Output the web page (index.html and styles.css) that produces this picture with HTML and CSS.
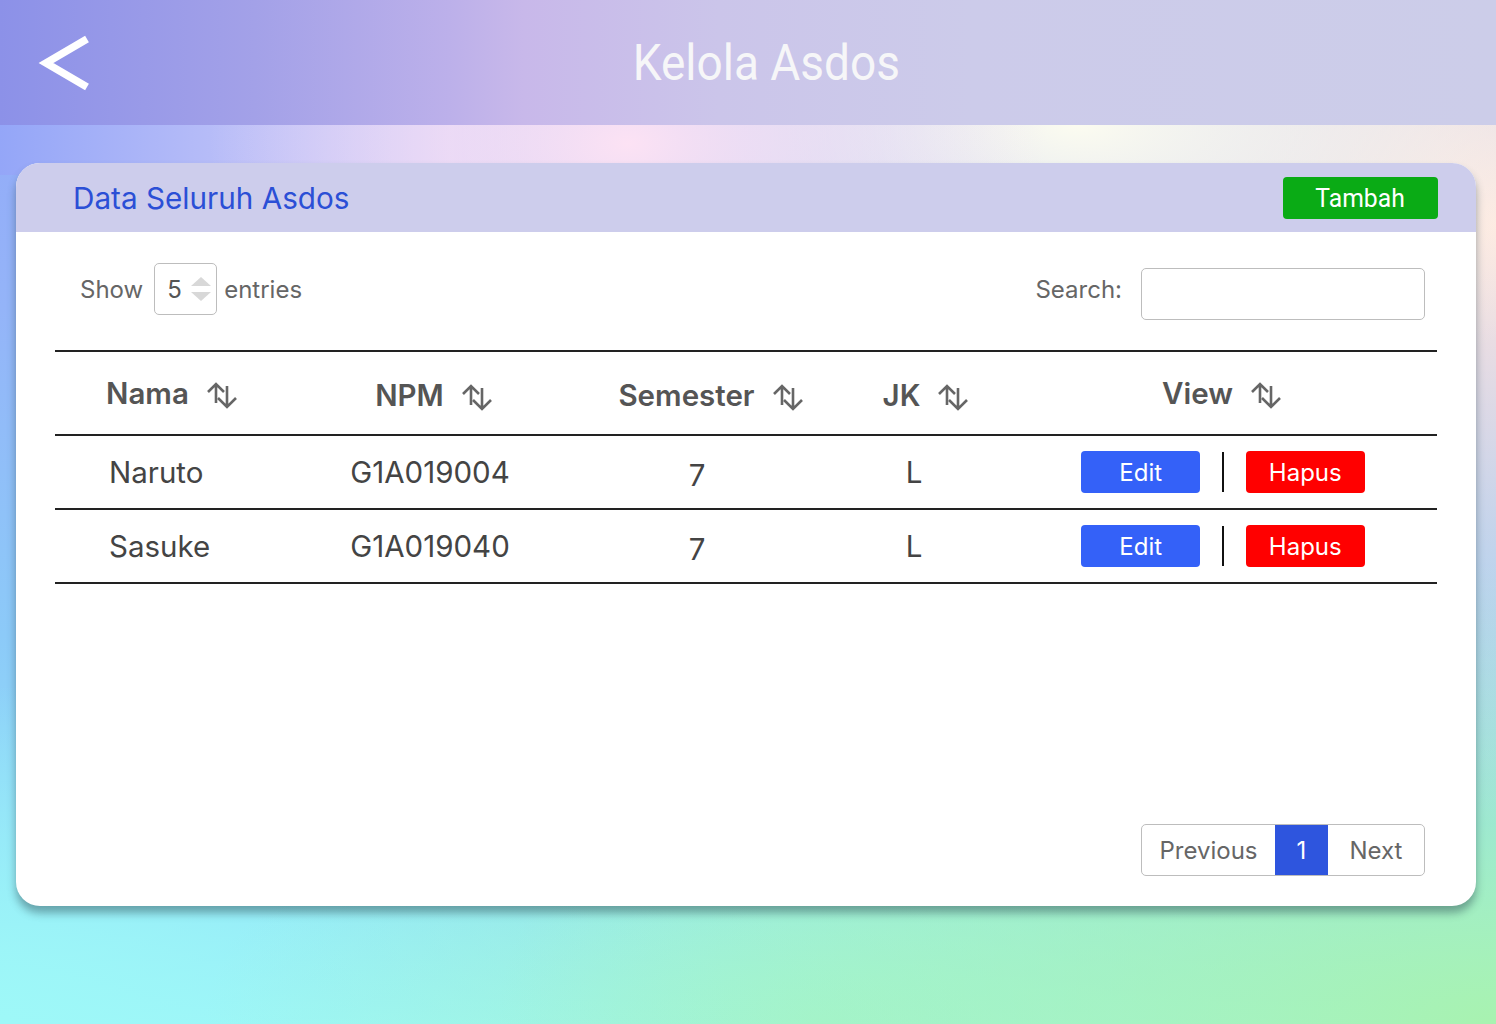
FILE: index.html
```html
<!DOCTYPE html>
<html lang="id">
<head>
<meta charset="utf-8">
<title>Kelola Asdos</title>
<link rel="stylesheet" href="styles.css">
</head>
<body>
<header class="topbar">
  <a class="back" href="#" aria-label="Kembali">
    <svg width="54" height="56" viewBox="0 0 54 56"><polyline points="49,4 8,28 49,52" fill="none" stroke="#fff" stroke-width="7.5" stroke-linejoin="miter" stroke-miterlimit="10"/></svg>
  </a>
  <h1 class="title"><span>Kelola Asdos</span></h1>
</header>

<main class="card">
  <div class="card-head">
    <h2 class="card-title">Data Seluruh Asdos</h2>
    <button class="btn-add"><span>Tambah</span></button>
  </div>

  <div class="controls">
    <label class="length">Show
      <span class="select"><span class="val">5</span>
        <span class="spin"><i class="up"></i><i class="down"></i></span>
      </span>
      entries</label>
    <label class="search">Search: <span class="search-box"></span></label>
  </div>

  <table class="grid">
    <colgroup>
      <col class="c1"><col class="c2"><col class="c3"><col class="c4"><col class="c5">
    </colgroup>
    <thead>
      <tr>
        <th class="left"><span class="th">Nama</span></th>
        <th class="h2"><span class="th">NPM</span></th>
        <th class="h3"><span class="th">Semester</span></th>
        <th class="h4"><span class="th">JK</span></th>
        <th class="h5"><span class="th">View</span></th>
      </tr>
    </thead>
    <tbody>
      <tr>
        <td class="left">Naruto</td>
        <td>G1A019004</td>
        <td class="num">7</td>
        <td>L</td>
        <td><div class="acts"><button class="btn edit">Edit</button><span class="sep"></span><button class="btn del">Hapus</button></div></td>
      </tr>
      <tr>
        <td class="left">Sasuke</td>
        <td>G1A019040</td>
        <td class="num">7</td>
        <td>L</td>
        <td><div class="acts"><button class="btn edit">Edit</button><span class="sep"></span><button class="btn del">Hapus</button></div></td>
      </tr>
    </tbody>
  </table>

  <nav class="pager">
    <a class="pg prev">Previous</a>
    <a class="pg cur">1</a>
    <a class="pg next">Next</a>
  </nav>
</main>
</body>
</html>
```
FILE: styles.css
```css
* { box-sizing: border-box; }
html, body { margin: 0; padding: 0; }
body {
  width: 1496px;
  height: 1024px;
  overflow: hidden;
  font-family: Inter, "Noto Sans", sans-serif;
  background-color: #93b0f8;
  background-image:
    radial-gradient(ellipse 420px 260px at 42% 14%, #fce2f4 0%, rgba(252,226,244,0) 100%),
    radial-gradient(ellipse 620px 300px at 72% 12%, #fcfcf0 0%, rgba(252,252,240,0) 100%),
    radial-gradient(ellipse 620px 600px at 100% 22%, #fde6de 0%, rgba(253,230,222,0) 100%),
    radial-gradient(ellipse 1000px 460px at 100% 100%, #a8f2b0 0%, rgba(168,242,176,0) 100%),
    radial-gradient(ellipse 620px 280px at 55% 100%, #a2f4d4 0%, rgba(162,244,212,0) 100%),
    radial-gradient(ellipse 560px 340px at 0% 100%, #9ef8f8 0%, rgba(158,248,248,0) 100%),
    linear-gradient(90deg, #94a6f8 0%, #b6bcf8 14%, #d6d0f8 30%, rgba(230,220,248,0) 45%),
    linear-gradient(180deg, #93a6f8 0%, #94b4f8 30%, #8ccaf8 62%, #92e4f8 88%, #9cf4f8 100%);
  background-size: 100% 100%, 100% 100%, 100% 100%, 100% 100%, 100% 100%, 100% 100%, 100% 175px, 100% 100%;
  background-repeat: no-repeat;
}

.topbar {
  height: 125px;
  display: flex;
  align-items: center;
  position: relative;
  background: linear-gradient(90deg, #8c91e8 0%, #a3a1e8 17%, #bcb0ea 30%, #c8b8ea 35%, #cbc5ea 48%, #cccbea 65%, #cccde9 100%);
}
.back {
  display: flex;
  margin-left: 38px;
}
.title {
  position: absolute;
  left: 0; right: 0; top: 0; bottom: 0;
  margin: 0;
  display: flex;
  align-items: center;
  justify-content: center;
  pointer-events: none;
  font-family: Roboto, "Open Sans", sans-serif;
  font-weight: 400;
  font-size: 50px;
  color: #f6f6f8;
  padding-left: 36px;
}
.title span { display: inline-block; transform: scaleX(0.92); }

.card {
  margin: 38px 20px 0 16px;
  height: 743px;
  background: #fff;
  border-radius: 24px;
  overflow: hidden;
  display: flex;
  flex-direction: column;
  box-shadow: 0 7px 8px rgba(40, 70, 80, 0.45);
}
.card-head {
  height: 69px;
  background: #cdcdec;
  display: flex;
  align-items: center;
  justify-content: space-between;
  padding: 0 38px 0 57px;
}
.card-title {
  margin: 0;
  font-weight: 400;
  font-size: 29.7px;
  color: #2b4fd6;
}
.btn-add {
  width: 155px;
  height: 42px;
  border: 0;
  border-radius: 4px;
  background: #0aab15;
  color: #fff;
  font-family: Roboto, sans-serif;
  font-size: 26px;
}
.btn-add span { display: inline-block; transform: scaleX(0.95); }

.controls {
  display: flex;
  justify-content: space-between;
  align-items: flex-start;
  padding: 31px 51px 0 64px;
  height: 118px;
  color: #666;
  font-size: 24px;
}
.length, .search {
  display: flex;
  align-items: center;
}
.select {
  width: 63px;
  height: 52px;
  margin: 0 7px 0 11px;
  border: 1.5px solid #bdbdbd;
  border-radius: 5px;
  display: flex;
  align-items: center;
  justify-content: space-between;
  padding: 0 5px 0 12px;
  color: #555;
}
.spin { display: flex; flex-direction: column; gap: 6px; }
.spin i { width: 0; height: 0; border-left: 10px solid transparent; border-right: 10px solid transparent; }
.spin .up { border-bottom: 9px solid #d8d8d8; }
.spin .down { border-top: 9px solid #d8d8d8; }
.search { gap: 19px; align-items: flex-start; padding-top: 12px; }
.search-box {
  width: 284px;
  height: 52px;
  margin-top: -7px;
  border: 1.5px solid #bdbdbd;
  border-radius: 5px;
  background: #fff;
}

.grid {
  margin: 0 39px;
  width: 1382px;
  table-layout: fixed;
  border-collapse: collapse;
}
.c1 { width: 245px; }
.c2 { width: 260px; }
.c3 { width: 274px; }
.c4 { width: 160px; }
.c5 { width: 443px; }
.grid thead tr { border-top: 2px solid #222; border-bottom: 2px solid #222; height: 84px; }
.grid tbody tr { border-bottom: 2px solid #222; height: 74px; }
.grid th {
  font-weight: 600;
  font-size: 29.5px;
  color: #555;
  text-align: center;
  padding: 0;
}
.grid th.left { text-align: left; padding-left: 51px; }
.grid th.h2 { padding-left: 12px; padding-top: 4px; }
.grid th.h3 { padding-left: 32px; padding-top: 4px; }
.grid th.h4 { padding-left: 28px; padding-top: 4px; }
.grid th.h5 { padding-left: 17px; }
.th {
  display: inline-flex;
  align-items: center;
  gap: 15px;
}
.th::after {
  content: "";
  width: 38px;
  height: 30px;
  margin-top: 3px;
  background: url("data:image/svg+xml,%3Csvg xmlns='http://www.w3.org/2000/svg' viewBox='0 0 38 30'%3E%3Cg fill='none' stroke='%23666' stroke-width='2.6'%3E%3Cpath d='M12 23V4M4 12l8-8 8 8'/%3E%3Cpath d='M23 6v21M14 18l9 9 9-9'/%3E%3C/g%3E%3C/svg%3E") no-repeat center / contain;
}
.grid td {
  font-size: 29.5px;
  color: #444;
  text-align: center;
  padding: 0;
}
.grid td.left { text-align: left; padding-left: 54px; }
.grid td.num { padding-top: 6px; }
.acts {
  display: flex;
  align-items: center;
  justify-content: center;
  gap: 22px;
  padding-left: 15px;
}
.btn {
  width: 119px;
  height: 42px;
  border: 0;
  border-radius: 4px;
  color: #fff;
  font-family: Inter, sans-serif;
  font-size: 24px;
}
.edit { background: #3461f8; }
.del { background: #ff0000; }
.sep { width: 1.5px; height: 40px; background: #111; }

.pager {
  margin-top: auto;
  margin-bottom: 30px;
  align-self: flex-end;
  margin-right: 51px;
  display: flex;
  height: 52px;
  border: 1.5px solid #bdbdbd;
  border-radius: 5px;
  overflow: hidden;
}
.pg {
  display: flex;
  align-items: center;
  justify-content: center;
  font-size: 24px;
  color: #666;
}
.prev { width: 133px; }
.cur { width: 53px; background: #2e55de; color: #fff; }
.next { width: 96px; }
```
